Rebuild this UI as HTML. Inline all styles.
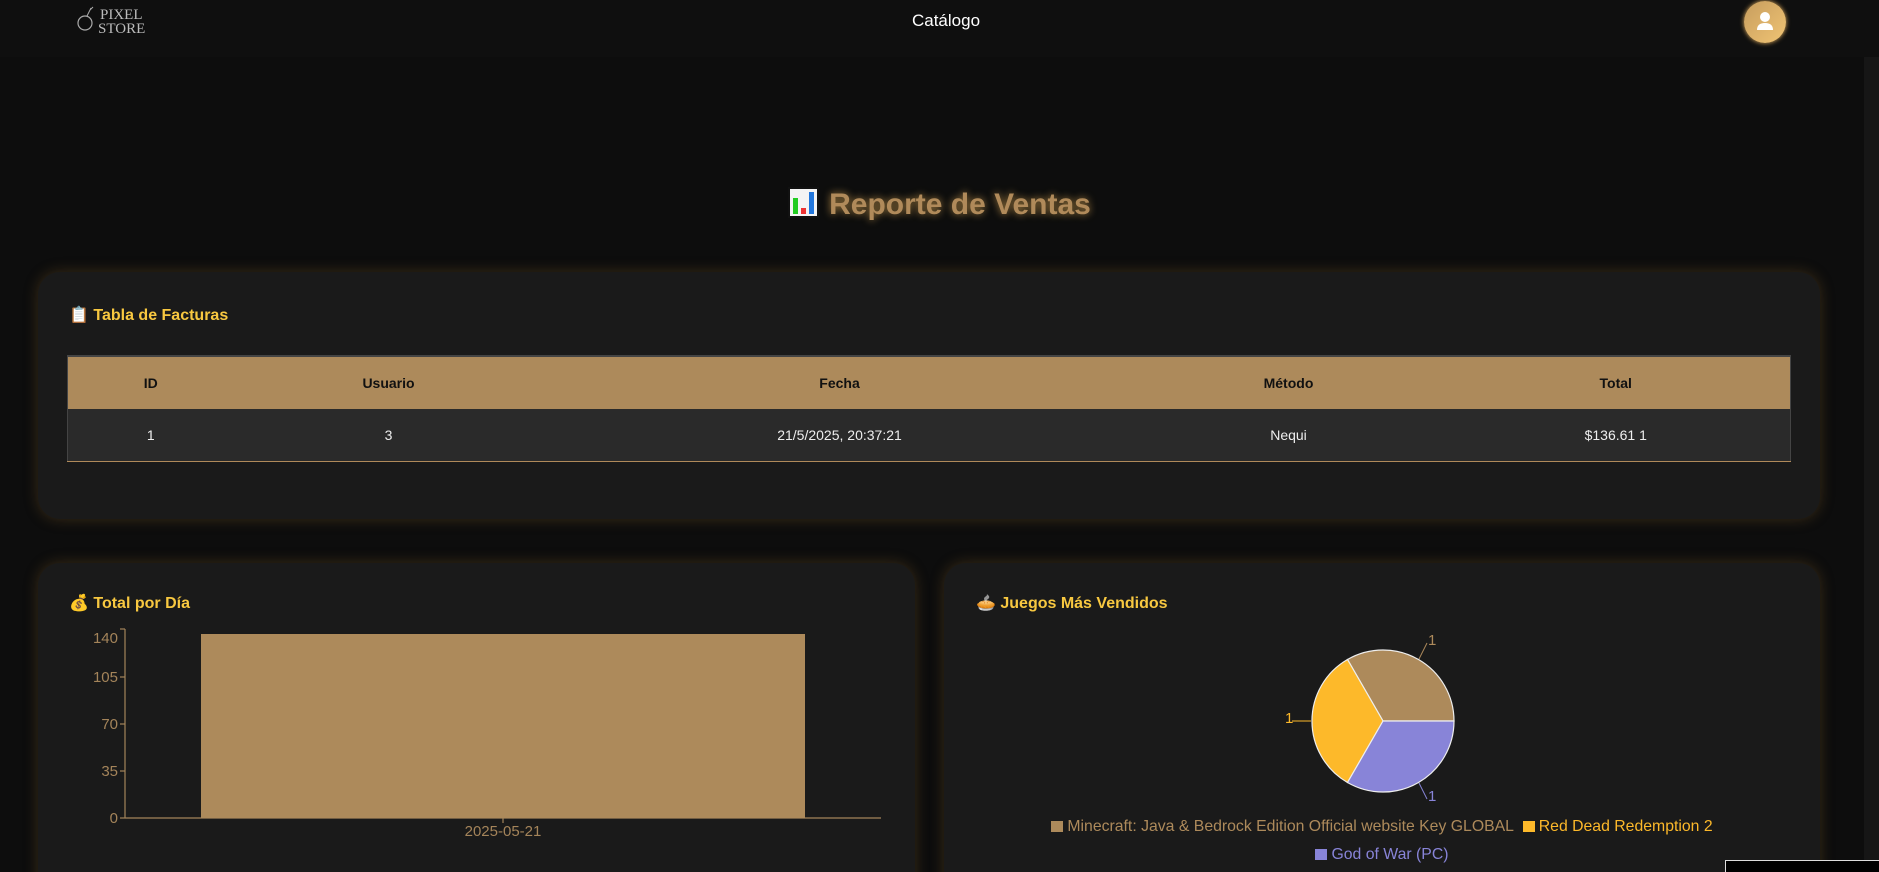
<!DOCTYPE html>
<html><head><meta charset="utf-8"><style>
*{margin:0;padding:0;box-sizing:border-box}
html,body{width:1879px;height:872px;overflow:hidden;background:#0d0d0d;font-family:"Liberation Sans",sans-serif;position:relative}
.hdr{position:absolute;left:0;top:0;width:1879px;height:57px;background:#0f0f0f}
.sb{position:absolute;left:1864px;top:57px;width:15px;height:815px;background:#161616}
.cat{position:absolute;left:0;width:1892px;text-align:center;top:11px;color:#fff;font-size:17px}
.av{position:absolute;left:1744px;top:1px;width:42px;height:42px;border-radius:50%;background:linear-gradient(135deg,#c79d5e,#f0c474);box-shadow:0 0 5px #e6b25f}
.title{position:absolute;left:0;width:1879px;top:187px;text-align:center;font-size:30px;font-weight:bold;color:#b08a5a;text-shadow:0 0 8px rgba(210,160,80,.8)}
.card{position:absolute;background:#1a1a1a;border-radius:22px;box-shadow:0 0 14px rgba(140,100,40,.35)}
.h{position:absolute;font-size:16px;font-weight:bold;color:#f8c840}
table{position:absolute;left:67px;top:355px;width:1724px;border-collapse:collapse;font-size:14px;text-align:center;border-left:1px solid #444;border-right:1px solid #444}
th{background:#ad8a5b;color:#111;height:53px;font-weight:bold;border-top:2px solid #444}
td{background:#2a2a2a;color:#eee;height:52px;border-bottom:1px solid #b08a5a}
.lg{position:absolute;font-size:15.8px;left:944px;width:876px;text-align:center}
.sq{display:inline-block;width:12px;height:11px;margin-right:4px;vertical-align:-1px}
</style></head><body>
<div class="hdr"></div>
<svg style="position:absolute;left:73px;top:4px" width="80" height="32"><circle cx="12" cy="19" r="7" fill="none" stroke="#aaa" stroke-width="1.2"/><path d="M14 12 L18 4 M17 6 L20 3" stroke="#aaa" fill="none"/><text x="27" y="15" font-family="Liberation Serif" font-size="15" fill="#bbb">PIXEL</text><text x="25" y="29" font-family="Liberation Serif" font-size="15" fill="#bbb">STORE</text></svg>
<div class="cat">Catálogo</div>
<div class="av"><svg width="42" height="42"><circle cx="21" cy="16" r="5" fill="#fff"/><path d="M13 29 Q13 22 21 22 Q29 22 29 29 Z" fill="#fff"/></svg></div>
<div class="sb"></div>
<div class="title"><span style="display:inline-block;width:31px;height:31px;background:#f4f4f4;border:2px solid #111;vertical-align:-4px;position:relative;margin-right:10px"><i style="position:absolute;left:3px;bottom:2px;width:5px;height:16px;background:#2c2"></i><i style="position:absolute;left:11px;bottom:2px;width:5px;height:6px;background:#e33"></i><i style="position:absolute;left:19px;bottom:2px;width:5px;height:22px;background:#27d"></i></span>Reporte de Ventas</div>

<div class="card" style="left:38px;top:272px;width:1782px;height:247px"></div>
<div class="h" style="left:69px;top:305px">📋&nbsp;Tabla de Facturas</div>
<table><tr><th style="width:166px">ID</th><th style="width:310px">Usuario</th><th style="width:592px">Fecha</th><th style="width:306px">Método</th><th>Total</th></tr>
<tr><td>1</td><td>3</td><td>21/5/2025, 20:37:21</td><td>Nequi</td><td>$136.61 1</td></tr></table>

<div class="card" style="left:38px;top:563px;width:877px;height:340px"></div>
<div class="card" style="left:944px;top:563px;width:876px;height:340px"></div>
<div class="h" style="left:69px;top:593px">💰&nbsp;Total por Día</div>
<div class="h" style="left:976px;top:593px">🥧&nbsp;Juegos Más Vendidos</div>

<svg style="position:absolute;left:0;top:0" width="1879" height="872">
<g stroke="#a4845a" stroke-width="1.2"><line x1="125" y1="629" x2="125" y2="818"/><line x1="125" y1="818" x2="881" y2="818"/>
<line x1="120" y1="629" x2="125" y2="629"/><line x1="120" y1="677" x2="125" y2="677"/><line x1="120" y1="724" x2="125" y2="724"/><line x1="120" y1="771" x2="125" y2="771"/><line x1="120" y1="818" x2="125" y2="818"/><line x1="503" y1="818" x2="503" y2="823"/></g>
<rect x="201" y="634" width="604" height="184" fill="#ad8a5b"/>
<g font-family="Liberation Sans" font-size="15" fill="#a4845a" text-anchor="end"><text x="118" y="643">140</text><text x="118" y="682">105</text><text x="118" y="729">70</text><text x="118" y="776">35</text><text x="118" y="823">0</text></g>
<text x="503" y="836" font-family="Liberation Sans" font-size="15" fill="#a4845a" text-anchor="middle">2025-05-21</text>
<g stroke="#eee" stroke-width="1.2">
<path d="M1383 721 L1454 721 A71 71 0 0 0 1347.5 659.5 Z" fill="#ad8a5b"/>
<path d="M1383 721 L1347.5 659.5 A71 71 0 0 0 1347.5 782.5 Z" fill="#fdb92a"/>
<path d="M1383 721 L1347.5 782.5 A71 71 0 0 0 1454 721 Z" fill="#8884d8"/></g>
<line x1="1419" y1="659" x2="1427" y2="643" stroke="#ad8a5b"/><line x1="1292" y1="721" x2="1311" y2="721" stroke="#fdb92a"/><line x1="1419" y1="783" x2="1427" y2="799" stroke="#8884d8"/>
<g font-family="Liberation Sans" font-size="15"><text x="1428" y="645" fill="#ad8a5b">1</text><text x="1285" y="723" fill="#fdb92a">1</text><text x="1428" y="801" fill="#8884d8">1</text></g>
</svg>
<div class="lg" style="top:818px"><span style="color:#ad8a5b"><span class="sq" style="background:#ad8a5b"></span>Minecraft: Java &amp; Bedrock Edition Official website Key GLOBAL</span>&nbsp;&nbsp;<span style="color:#fdb92a"><span class="sq" style="background:#fdb92a"></span>Red Dead Redemption 2</span></div>
<div class="lg" style="top:846px;color:#8884d8"><span class="sq" style="background:#8884d8"></span>God of War (PC)</div>
<div style="position:absolute;left:1725px;top:860px;width:160px;height:20px;background:#000;border:1px solid #ddd"></div>
</body></html>
